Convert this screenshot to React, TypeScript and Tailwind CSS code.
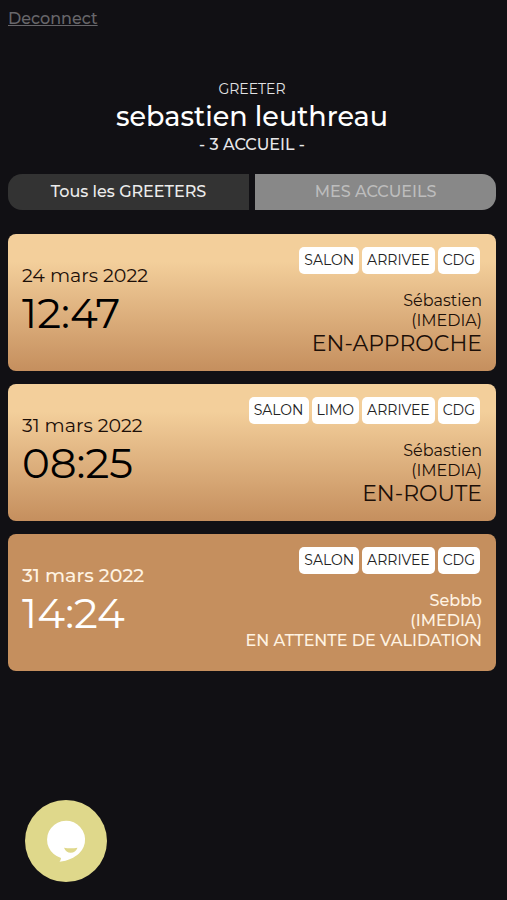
import clsx from "clsx";

type Accueil = {
  date: string;
  time: string;
  tags: string[];
  client: string;
  company: string;
  status: string;
  pending?: boolean;
};

const accueils: Accueil[] = [
  {
    date: "24 mars 2022",
    time: "12:47",
    tags: ["SALON", "ARRIVEE", "CDG"],
    client: "Sébastien",
    company: "(IMEDIA)",
    status: "EN-APPROCHE",
  },
  {
    date: "31 mars 2022",
    time: "08:25",
    tags: ["SALON", "LIMO", "ARRIVEE", "CDG"],
    client: "Sébastien",
    company: "(IMEDIA)",
    status: "EN-ROUTE",
  },
  {
    date: "31 mars 2022",
    time: "14:24",
    tags: ["SALON", "ARRIVEE", "CDG"],
    client: "Sebbb",
    company: "(IMEDIA)",
    status: "EN ATTENTE DE VALIDATION",
    pending: true,
  },
];

const AccueilCard = ({ accueil }: { accueil: Accueil }) => (
  <li
    className={clsx(
      "flex min-h-[137px] justify-between rounded-lg px-[14px] pt-[13px] pb-2",
      accueil.pending
        ? "bg-[#c58f5e] font-medium text-[#fff3e2]"
        : "bg-linear-to-b from-[#f3cf9b] from-20% to-[#c58f5e] text-[#1c0f08]"
    )}
  >
    <div className="pt-[17px]">
      <p className="text-[19px] leading-6">{accueil.date}</p>
      <p
        className={clsx(
          "text-[42px] leading-[50px] font-normal",
          accueil.pending ? "text-white" : "text-black"
        )}
      >
        {accueil.time}
      </p>
    </div>
    <div className="flex flex-col items-end text-right">
      <ul className="mr-[2px] mb-[17px] flex gap-[3px]">
        {accueil.tags.map((tag) => (
          <li
            key={tag}
            className="rounded-[5px] bg-white px-[5px] text-[14px] leading-[27px] font-normal text-[#222]"
          >
            {tag}
          </li>
        ))}
      </ul>
      <p className="text-[16px] leading-5">{accueil.client}</p>
      <p className="text-[16px] leading-5">{accueil.company}</p>
      <p
        className={
          accueil.pending ? "text-[16px] leading-5" : "text-[22px] leading-[26px]"
        }
      >
        {accueil.status}
      </p>
    </div>
  </li>
);

export default function App() {
  return (
    <div className="min-h-screen bg-[#111014] pt-2 pr-[11px] pb-28 pl-2 font-['Montserrat','Inter',sans-serif] text-white">
      <a
        href="#deconnect"
        className="block w-fit text-[16px] leading-[22px] font-medium text-[#68676b] underline"
      >
        Deconnect
      </a>

      <header className="pt-[49px] text-center font-medium">
        <p className="text-[14px] leading-5 font-normal text-[#e2e2e4]">GREETER</p>
        <h1 className="text-[27px] leading-9">sebastien leuthreau</h1>
        <p className="text-[16px] leading-5 text-[#e8e8ea]">- 3 ACCUEIL -</p>
      </header>

      <div className="mt-[19px] flex gap-[6px] text-[16px] font-medium">
        <button className="h-9 flex-1 rounded-l-[14px] bg-[#333] text-[#ececec]">
          Tous les GREETERS
        </button>
        <button className="h-9 flex-1 rounded-r-[14px] bg-[#888] text-[#bdbdbd]">
          MES ACCUEILS
        </button>
      </div>

      <ul className="mt-6 flex flex-col gap-[13px]">
        {accueils.map((accueil) => (
          <AccueilCard key={accueil.date + accueil.time} accueil={accueil} />
        ))}
      </ul>

      {/* Chat widget */}
      <button
        aria-label="Chat"
        className="fixed bottom-[18px] left-[25px] size-[82px] rounded-full bg-[#dfd88b]"
      >
        <svg viewBox="0 0 82 82" className="size-full">
          <path
            d="M36 58A19 19 0 1 1 54 53.600C49.500 57.500 43 61.200 34.500 61.700Q36 60 36 58z"
            fill="#fff"
          />
          <path
            d="M39 47.700Q45.700 49 52.500 47.700Q50.500 52.800 45.700 52.800Q41 52.800 39 47.700z"
            fill="#dfd88b"
          />
        </svg>
      </button>
    </div>
  );
}
